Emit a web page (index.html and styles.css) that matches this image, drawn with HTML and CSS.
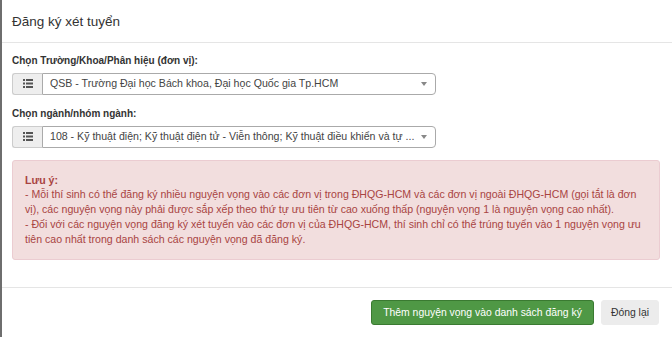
FILE: index.html
```html
<!DOCTYPE html>
<html lang="vi">

<head>
    <meta charset="UTF-8">
    <meta name="viewport" content="width=device-width, initial-scale=1.0">
    <title>Đăng ký xét tuyển</title>
    <link rel="stylesheet" href="styles.css">
</head>

<body>
    <div class="modal">
        <div class="modal-header">
            <h4 class="modal-title">Đăng ký xét tuyển</h4>
        </div>
        <div class="modal-body">
            <div class="form-group">
                <label>Chọn Trường/Khoa/Phân hiệu (đơn vị):</label>
                <div class="input-group">
                    <span class="addon">
                        <svg width="10" height="9" viewBox="0 0 10 9"><rect x="0" y="0" width="2" height="2"/><rect x="3" y="0" width="7" height="2"/><rect x="0" y="3.5" width="2" height="2"/><rect x="3" y="3.5" width="7" height="2"/><rect x="0" y="7" width="2" height="2"/><rect x="3" y="7" width="7" height="2"/></svg>
                    </span>
                    <div class="select">
                        <span class="select-text">QSB - Trường Đại học Bách khoa, Đại học Quốc gia Tp.HCM</span>
                        <span class="caret"></span>
                    </div>
                </div>
            </div>
            <div class="form-group">
                <label>Chọn ngành/nhóm ngành:</label>
                <div class="input-group">
                    <span class="addon">
                        <svg width="10" height="9" viewBox="0 0 10 9"><rect x="0" y="0" width="2" height="2"/><rect x="3" y="0" width="7" height="2"/><rect x="0" y="3.5" width="2" height="2"/><rect x="3" y="3.5" width="7" height="2"/><rect x="0" y="7" width="2" height="2"/><rect x="3" y="7" width="7" height="2"/></svg>
                    </span>
                    <div class="select">
                        <span class="select-text">108 - Kỹ thuật điện; Kỹ thuật điện tử - Viễn thông; Kỹ thuật điều khiển và tự ...</span>
                        <span class="caret"></span>
                    </div>
                </div>
            </div>
            <div class="alert">
                <strong>Lưu ý:</strong><br>
                - Mỗi thí sinh có thể đăng ký nhiều nguyện vọng vào các đơn vị trong ĐHQG-HCM và các đơn vị ngoài ĐHQG-HCM (gọi tắt là đơn vị), các nguyện vọng này phải được sắp xếp theo thứ tự ưu tiên từ cao xuống thấp (nguyện vọng 1 là nguyện vọng cao nhất).<br>
                - Đối với các nguyện vọng đăng ký xét tuyển vào các đơn vị của ĐHQG-HCM, thí sinh chỉ có thể trúng tuyển vào 1 nguyện vọng ưu tiên cao nhất trong danh sách các nguyện vọng đã đăng ký.
            </div>
        </div>
        <div class="modal-footer">
            <button class="btn btn-success">Thêm nguyện vọng vào danh sách đăng ký</button>
            <button class="btn btn-default">Đóng lại</button>
        </div>
    </div>
</body>

</html>
```

FILE: styles.css
```css
* {
    margin: 0;
    padding: 0;
    box-sizing: border-box;
}
body {
    background: #6e6e6e;
    font-family: "Liberation Sans", Arial, sans-serif;
    font-size: 10.6px;
    line-height: 14.8px;
    color: #333;
    height: 337px;
    overflow: hidden;
}
.modal {
    margin-left: 2px;
    background: #fff;
    height: 337px;
}
.modal-header {
    padding: 12px 12px 10px 10px;
    border-bottom: 1px solid #e5e5e5;
}
.modal-title {
    font-size: 13.5px;
    font-weight: normal;
    line-height: 20px;
    color: #333;
}
.modal-body {
    padding: 11px 12px 0 10px;
}
.form-group {
    margin-bottom: 12px;
}
.form-group label {
    display: block;
    font-size: 10px;
    font-weight: bold;
    margin-bottom: 4px;
}
.input-group {
    display: flex;
    width: 424px;
    height: 22px;
}
.addon {
    width: 30px;
    display: flex;
    align-items: center;
    justify-content: center;
    background: #eee;
    border: 1px solid #ccc;
    border-right: 0;
    border-radius: 3px 0 0 3px;
}
.addon svg {
    fill: #555;
}
.select {
    flex: 1;
    display: flex;
    align-items: center;
    border: 1px solid #aaa;
    border-radius: 0 4px 4px 0;
    padding: 0 8px 0 7px;
    color: #444;
    min-width: 0;
}
.select-text {
    flex: 1;
    white-space: nowrap;
    overflow: hidden;
}
.caret {
    width: 0;
    height: 0;
    border-left: 3px solid transparent;
    border-right: 3px solid transparent;
    border-top: 4px solid #888;
    margin-left: 6px;
}
.alert {
    margin-top: 1px;
    background: #f2dede;
    border: 1px solid #ebccd1;
    border-radius: 3px;
    color: #a94442;
    padding: 12px 12px;
}
.modal-footer {
    margin-top: 27px;
    border-top: 1px solid #e5e5e5;
    padding: 12px 13px 0 10px;
    display: flex;
    justify-content: flex-end;
    gap: 7px;
}
.btn {
    font-family: inherit;
    font-size: 10.4px;
    height: 25px;
    padding: 0 11px;
    border-radius: 3px;
    border: 1px solid transparent;
    cursor: pointer;
}
.btn-success {
    background: #4f9845;
    border-color: #3a7a31;
    color: #fff;
}
.btn-default {
    padding: 0 9px;
    background: #ececec;
    border-color: #ececec;
    color: #333;
}
```
